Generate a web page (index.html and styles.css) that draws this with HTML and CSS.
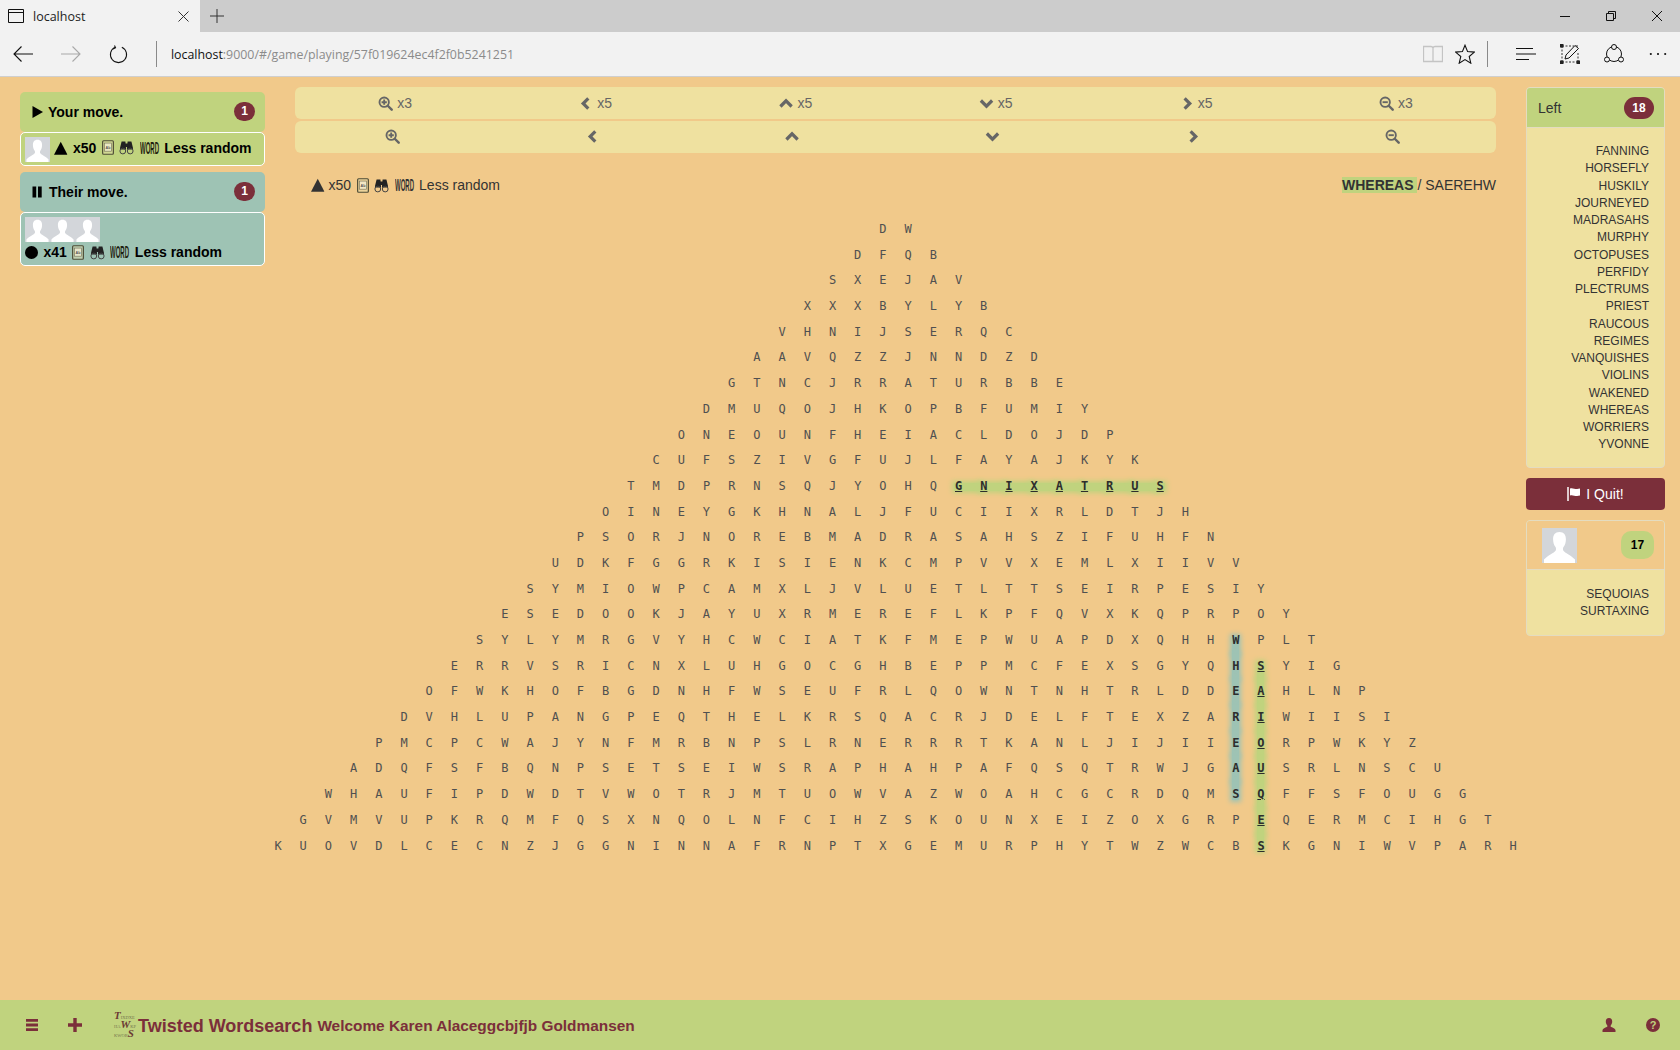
FILE: index.html
```html
<!DOCTYPE html>
<html lang="en">
<head>
<meta charset="utf-8">
<title>localhost</title>
<link rel="stylesheet" href="styles.css">
</head>
<body>
<svg class="defs" aria-hidden="true">
  <symbol id="zoomin" viewBox="0 0 16 16"><circle cx="6.6" cy="6.6" r="5" fill="none" stroke="currentColor" stroke-width="2"/><path d="M10.4 10.4 14.6 14.6" stroke="currentColor" stroke-width="2.6" stroke-linecap="round"/><path d="M6.6 3.8V9.4M3.8 6.6H9.4" stroke="currentColor" stroke-width="2"/></symbol>
  <symbol id="zoomout" viewBox="0 0 16 16"><circle cx="6.6" cy="6.6" r="5" fill="none" stroke="currentColor" stroke-width="2"/><path d="M10.4 10.4 14.6 14.6" stroke="currentColor" stroke-width="2.6" stroke-linecap="round"/><path d="M3.8 6.6H9.4" stroke="currentColor" stroke-width="2"/></symbol>
  <symbol id="chl" viewBox="0 0 16 16"><path d="M11 2.5 5.5 8 11 13.5" fill="none" stroke="currentColor" stroke-width="3.4"/></symbol>
  <symbol id="chr" viewBox="0 0 16 16"><path d="M6 2.5 11.500 8 6 13.5" fill="none" stroke="currentColor" stroke-width="3.4"/></symbol>
  <symbol id="chu" viewBox="0 0 16 16"><path d="M1.500 11.200 7.500 5.200 13.500 11.200" fill="none" stroke="currentColor" stroke-width="3.4"/></symbol>
  <symbol id="chd" viewBox="0 0 16 16"><path d="M2 4.8 8 10.8 14 4.8" fill="none" stroke="currentColor" stroke-width="3.4"/></symbol>
  <symbol id="person" viewBox="0 0 35 35"><rect width="35" height="35" fill="#d3d6da"/><path d="M17.5 4c-4.4 0-6.6 3-6.4 7.5.1 3 .8 5.6 2.4 7.6.6.8.8 2.400.1 3.700C12 25 6.500 27 2 31.500V35h31v-3.500C28.500 27 23 25 21.400 22.800c-.7-1.300-.5-2.900.1-3.700 1.600-2 2.300-4.600 2.400-7.600C24.100 7 21.900 4 17.500 4Z" fill="#fff"/></symbol>
  <symbol id="book" viewBox="0 0 13 16"><rect x=".7" y=".7" width="11.600" height="14.600" rx="1" fill="#e8dfae" fill-opacity=".45" stroke="#4e4c36" stroke-width="1.300"/><rect x="2.800" y="3.200" width="7.400" height="8.800" fill="#f5f0d5" fill-opacity=".7" stroke="#77745a" stroke-width=".7"/><text x="6.500" y="9.600" text-anchor="middle" class="booktext">Ab</text></symbol>
  <symbol id="binoc" viewBox="0 0 15 15"><path d="M1 8 2.600 1.500H6.400L7 8V9.400H1ZM8 8 8.600 1.500H12.400L14 8V9.400H8Z" fill="#222"/><path d="M6 3.500H9V7H6Z" fill="#222"/><circle cx="3.800" cy="11" r="2.900" fill="none" stroke="#444" stroke-width="1"/><circle cx="11.200" cy="11" r="2.900" fill="none" stroke="#444" stroke-width="1"/></symbol>
  <symbol id="tri" viewBox="0 0 14 14"><path d="M7 .5 14 14H0Z" fill="currentColor"/></symbol>
</svg>

<header class="chrome">
  <div class="tabstrip">
    <div class="tab">
      <svg class="tab-icon" viewBox="0 0 16 14"><path d="M.5.5H15.500V13.500H.5ZM.5 3.500H15.500" fill="none" stroke="#111"/></svg>
      <span class="tab-title">localhost</span>
      <svg class="tab-close" viewBox="0 0 11 11"><path d="M.5.5 10.500 10.500M10.500.5.5 10.500" stroke="#333" fill="none"/></svg>
    </div>
    <svg class="tab-new" viewBox="0 0 14 14"><path d="M7 0V14M0 7H14" stroke="#333" fill="none"/></svg>
    <div class="window-controls">
      <svg class="win" viewBox="0 0 10 10"><path d="M0 5.500H10" stroke="#111" fill="none"/></svg>
      <svg class="win" viewBox="0 0 10 10"><path d="M.5 2.500H7.500V9.500H.5ZM2.500 2.500V.5H9.500V7.500H7.500" stroke="#111" fill="none"/></svg>
      <svg class="win" viewBox="0 0 10 10"><path d="M0 0 10 10M10 0 0 10" stroke="#111" fill="none"/></svg>
    </div>
  </div>
  <div class="toolbar">
    <svg class="nav nav-back" viewBox="0 0 20 16"><path d="M20 8H1M8.500.5 1 8 8.500 15.500" stroke="#111" fill="none" stroke-width="1.100"/></svg>
    <svg class="nav nav-fwd" viewBox="0 0 20 16"><path d="M0 8H19M11.500.5 19 8 11.500 15.500" stroke="#a8a8a8" fill="none" stroke-width="1.100"/></svg>
    <svg class="nav nav-reload" viewBox="0 0 20 20"><path d="M6.500 2.300A8.500 8.500 0 1 0 13.500 2.300M5.800.5 6.900 3 4.300 4.200" stroke="#111" fill="none" stroke-width="1.100"/></svg>
    <span class="tool-sep"></span>
    <span class="url"><span class="url-host">localhost</span>:9000/#/game/playing/57f019624ec4f2f0b5241251</span>
    <svg class="tool tool-read" viewBox="0 0 20 18"><path d="M.5 1.500H8C9 1.500 9.700 2 10 3 10.300 2 11 1.500 12 1.500H19.500V16.500H.5ZM10 3V16.500" stroke="#c4c4c4" fill="none" stroke-width="1.300"/></svg>
    <svg class="tool tool-star" viewBox="0 0 20 20"><path d="M10 1.200 12.600 7.600 19.400 8.100 14.200 12.500 15.800 19.200 10 15.600 4.200 19.200 5.800 12.500.6 8.100 7.400 7.600Z" stroke="#111" fill="none" stroke-width="1.100"/></svg>
    <span class="tool-sep tool-sep-right"></span>
    <svg class="tool tool-hub" viewBox="0 0 20 14"><path d="M0 1.500H17M0 7H20M0 12.500H13" stroke="#111" fill="none" stroke-width="1.100"/></svg>
    <svg class="tool tool-note" viewBox="0 0 20 20"><path d="M2 2H18M2 18H18M2 2V18M18 9V18" stroke="#333" stroke-dasharray="2 1.500" fill="none"/><path d="M5 15 6 11 15 1.500 18.500 4.500 9 14Z" stroke="#111" fill="#f2f2f2"/><path d="M0 0H3.500V3.500H0ZM16.500 16.500H20V20H16.500ZM0 16.500H3.500V20H0Z" fill="#222"/></svg>
    <svg class="tool tool-share" viewBox="0 0 20 20"><circle cx="10" cy="10" r="7.500" fill="none" stroke="#111"/><circle cx="10" cy="3" r="2.500" fill="#f2f2f2" stroke="#111"/><circle cx="3" cy="15.500" r="2.500" fill="#f2f2f2" stroke="#111"/><circle cx="17" cy="15.500" r="2.500" fill="#f2f2f2" stroke="#111"/></svg>
    <svg class="tool tool-more" viewBox="0 0 20 4"><circle cx="2" cy="2" r="1.200" fill="#111"/><circle cx="10" cy="2" r="1.200" fill="#111"/><circle cx="18" cy="2" r="1.200" fill="#111"/></svg>
  </div>
</header>

<main class="page">
  <aside class="left">
    <div class="move-head green">
      <svg class="head-icon" viewBox="0 0 12 14"><path d="M.5 1 11 7 .5 13Z" fill="#000"/></svg>
      <span class="head-text">Your move.</span>
      <span class="badge">1</span>
    </div>
    <div class="game green">
      <div class="game-line with-avatar">
        <svg class="avatar"><use href="#person"/></svg>
        <svg class="mark"><use href="#tri"/></svg>
        <span>x50</span>
        <svg class="bk"><use href="#book"/></svg>
        <svg class="bn"><use href="#binoc"/></svg>
        <span class="wordmark"><span>WORD</span></span>
        <span>Less random</span>
      </div>
    </div>
    <div class="move-head teal second">
      <svg class="head-icon" viewBox="0 0 12 14"><path d="M.5 1.500H4.200V12.500H.5ZM6 1.500H9.700V12.500H6Z" fill="#000"/></svg>
      <span class="head-text head-text-their">Their move.</span>
      <span class="badge">1</span>
    </div>
    <div class="game teal">
      <div class="avatars">
        <svg class="avatar"><use href="#person"/></svg><svg class="avatar"><use href="#person"/></svg><svg class="avatar"><use href="#person"/></svg>
      </div>
      <div class="game-line">
        <span class="dot"></span>
        <span>x41</span>
        <svg class="bk"><use href="#book"/></svg>
        <svg class="bn"><use href="#binoc"/></svg>
        <span class="wordmark"><span>WORD</span></span>
        <span>Less random</span>
      </div>
    </div>
  </aside>

  <section class="center">
    <div class="pad">
      <button class="pad-btn"><svg class="ic"><use href="#zoomin"/></svg>x3</button>
      <button class="pad-btn"><svg class="ic"><use href="#chl"/></svg>x5</button>
      <button class="pad-btn"><svg class="ic"><use href="#chu"/></svg>x5</button>
      <button class="pad-btn"><svg class="ic"><use href="#chd"/></svg>x5</button>
      <button class="pad-btn"><svg class="ic"><use href="#chr"/></svg>x5</button>
      <button class="pad-btn"><svg class="ic"><use href="#zoomout"/></svg>x3</button>
    </div>
    <div class="pad pad-plain">
      <button class="pad-btn"><svg class="ic"><use href="#zoomin"/></svg></button>
      <button class="pad-btn"><svg class="ic"><use href="#chl"/></svg></button>
      <button class="pad-btn"><svg class="ic"><use href="#chu"/></svg></button>
      <button class="pad-btn"><svg class="ic"><use href="#chd"/></svg></button>
      <button class="pad-btn"><svg class="ic"><use href="#chr"/></svg></button>
      <button class="pad-btn"><svg class="ic"><use href="#zoomout"/></svg></button>
    </div>
    <div class="info">
      <div class="info-left">
        <svg class="mark"><use href="#tri"/></svg>
        <span>x50</span>
        <svg class="bk"><use href="#book"/></svg>
        <svg class="bn"><use href="#binoc"/></svg>
        <span class="wordmark"><span>WORD</span></span>
        <span>Less random</span>
      </div>
      <div class="info-right"><strong class="found">WHEREAS </strong> / SAEREHW</div>
    </div>
    <div class="grid">
      <div class="row">DW</div>
      <div class="row">DFQB</div>
      <div class="row">SXEJAV</div>
      <div class="row">XXXBYLYB</div>
      <div class="row">VHNIJSERQC</div>
      <div class="row">AAVQZZJNNDZD</div>
      <div class="row">GTNCJRRATURBBE</div>
      <div class="row">DMUQOJHKOPBFUMIY</div>
      <div class="row">ONEOUNFHEIACLDOJDP</div>
      <div class="row">CUFSZIVGFUJLFAYAJKYK</div>
      <div class="row">TMDPRNSQJYOHQ<span class="hit hx first">G</span><span class="hit hx">N</span><span class="hit hx">I</span><span class="hit hx">X</span><span class="hit hx">A</span><span class="hit hx">T</span><span class="hit hx">R</span><span class="hit hx">U</span><span class="hit hx last">S</span></div>
      <div class="row">OINEYGKHNALJFUCIIXRLDTJH</div>
      <div class="row">PSORJNOREBMADRASAHSZIFUHFN</div>
      <div class="row">UDKFGGRKISIENKCMPVVXEMLXIIVV</div>
      <div class="row">SYMIOWPCAMXLJVLUETLTTSEIRPESIY</div>
      <div class="row">ESEDOOKJAYUXRMEREFLKPFQVXKQPRPOY</div>
      <div class="row">SYLYMRGVYHCWCIATKFMEPWUAPDXQHH<span class="hit hv blue first">W</span>PLT</div>
      <div class="row">ERRVSRICNXLUHGOCGHBEPPMCFEXSGYQ<span class="hit hv blue">H</span><span class="hit hv first ul">S</span>YIG</div>
      <div class="row">OFWKHOFBGDNHFWSEUFRLQOWNTNHTRLDD<span class="hit hv blue">E</span><span class="hit hv ul">A</span>HLNP</div>
      <div class="row">DVHLUPANGPEQTHELKRSQACRJDELFTEXZA<span class="hit hv blue">R</span><span class="hit hv ul">I</span>WIISI</div>
      <div class="row">PMCPCWAJYNFMRBNPSLRNERRRTKANLJIJII<span class="hit hv blue">E</span><span class="hit hv ul">O</span>RPWKYZ</div>
      <div class="row">ADQFSFBQNPSETSEIWSRAPHAHPAFQSQTRWJG<span class="hit hv blue">A</span><span class="hit hv ul">U</span>SRLNSCU</div>
      <div class="row">WHAUFIPDWDTVWOTRJMTUOWVAZWOAHCGCRDQM<span class="hit hv blue last">S</span><span class="hit hv ul">Q</span>FFSFOUGG</div>
      <div class="row">GVMVUPKRQMFQSXNQOLNFCIHZSKOUNXEIZOXGRP<span class="hit hv ul">E</span>QERMCIHGT</div>
      <div class="row">KUOVDLCECNZJGGNINNAFRNPTXGEMURPHYTWZWCB<span class="hit hv last ul">S</span>KGNIWVPARH</div>
    </div>
  </section>

  <aside class="right">
    <div class="panel">
      <div class="panel-head green">
        <span class="panel-label">Left</span>
        <span class="badge badge-wide">18</span>
      </div>
      <ul class="words">
        <li>FANNING</li><li>HORSEFLY</li><li>HUSKILY</li><li>JOURNEYED</li><li>MADRASAHS</li><li>MURPHY</li><li>OCTOPUSES</li><li>PERFIDY</li><li>PLECTRUMS</li><li>PRIEST</li><li>RAUCOUS</li><li>REGIMES</li><li>VANQUISHES</li><li>VIOLINS</li><li>WAKENED</li><li>WHEREAS</li><li>WORRIERS</li><li>YVONNE</li>
      </ul>
    </div>
    <button class="quit">
      <svg class="flag" viewBox="0 0 14 14"><path d="M1 0V14" stroke="#fff" stroke-width="1.500"/><path d="M3 1.500C6 .2 8 3 13 1.500V8.500C8 10 6 7.200 3 8.500Z" fill="#fff"/></svg>
      I Quit!
    </button>
    <div class="panel">
      <div class="panel-head player">
        <svg class="avatar-large"><use href="#person"/></svg>
        <span class="score">17</span>
      </div>
      <ul class="words words-short">
        <li>SEQUOIAS</li><li>SURTAXING</li>
      </ul>
    </div>
  </aside>
</main>

<footer class="footer">
  <svg class="foot-icon menu" viewBox="0 0 12 12"><path d="M0 0H12V2.800H0ZM0 4.600H12V7.400H0ZM0 9.200H12V12H0Z" fill="currentColor"/></svg>
  <svg class="foot-icon plus" viewBox="0 0 14 14"><path d="M5.300 0H8.700V5.300H14V8.700H8.700V14H5.300V8.700H0V5.300H5.300Z" fill="currentColor"/></svg>
  <div class="logo">
    <span class="logo-line"><b>T</b>IXDXE</span>
    <span class="logo-line">HA<b>W</b>KP</span>
    <span class="logo-line">KWOR<b>S</b></span>
  </div>
  <span class="brand">Twisted Wordsearch</span>
  <span class="welcome">Welcome Karen Alaceggcbjfjb Goldmansen</span>
  <svg class="foot-icon user" viewBox="0 0 14 14"><path d="M7 0C4.800 0 3.700 1.600 3.800 3.800 3.900 5.400 4.500 6.600 5.300 7.500 5.500 8.200 5.400 8.700 4.800 9 3 9.800 1 10.500.5 12V14H13.500V12C13 10.500 11 9.800 9.200 9 8.600 8.700 8.500 8.200 8.700 7.500 9.500 6.600 10.100 5.400 10.200 3.800 10.300 1.600 9.200 0 7 0Z" fill="currentColor"/></svg>
  <span class="help">?</span>
</footer>
</body>
</html>
```
FILE: styles.css
```css
* { box-sizing: border-box; }

html, body { margin: 0; height: 100%; }

body {
  display: flex;
  flex-direction: column;
  height: 1050px;
  overflow: hidden;
  background: #f1c98a;
  color: #333;
  font-family: "Liberation Sans", Arial, sans-serif;
  font-size: 14px;
  line-height: 20px;
}

.defs { display: none; }

/* browser chrome */
.chrome { flex: none; }

.tabstrip {
  display: flex;
  align-items: center;
  height: 32px;
  background: #cccccc;
}

.tab {
  display: flex;
  align-items: center;
  width: 200px;
  height: 32px;
  padding: 0 11px 0 8px;
  background: #f2f2f2;
  color: #222;
}

.tab-icon { width: 16px; height: 14px; }

.tab-title {
  margin-left: 9px;
  padding-top: 2px;
  font-family: "Open Sans", sans-serif;
  font-size: 12.500px;
}

.tab-close { width: 11px; height: 11px; margin-left: auto; }

.tab-new { width: 14px; height: 14px; margin-left: 10px; }

.window-controls {
  display: flex;
  gap: 36px;
  margin-left: auto;
  margin-right: 18px;
}

.win { width: 10px; height: 10px; }

.toolbar {
  display: flex;
  align-items: center;
  height: 45px;
  background: #f2f2f2;
  border-bottom: 1px solid #cfcfcf;
}

.nav-back { width: 20px; height: 16px; margin-left: 13px; }
.nav-fwd { width: 20px; height: 16px; margin-left: 28px; }
.nav-reload { width: 19px; height: 19px; margin-left: 28px; }

.tool-sep {
  width: 1px;
  height: 26px;
  margin-left: 28px;
  background: #8a8a8a;
}

.url {
  margin-left: 14px;
  padding-top: 2px;
  color: #8b8b8b;
  font-family: "Open Sans", sans-serif;
  font-size: 12.380px;
  white-space: nowrap;
}

.url-host { color: #111; }

.tool-read { width: 20px; height: 18px; margin-left: auto; }
.tool-star { width: 20px; height: 20px; margin-left: 12px; }
.tool-sep-right { margin-left: 12px; }
.tool-hub { width: 20px; height: 14px; margin-left: 28px; }
.tool-note { width: 20px; height: 20px; margin-left: 24px; }
.tool-share { width: 20px; height: 20px; margin-left: 24px; }
.tool-more { width: 18px; height: 4px; margin-left: 25px; margin-right: 13px; }

/* page columns */
.page {
  flex: 1;
  display: flex;
  align-items: flex-start;
  min-height: 0;
}

.green { background: #c0d37e; }
.teal { background: #9ec3b4; }

.left {
  flex: none;
  width: 245px;
  margin: 15px 0 0 20px;
  color: #000;
  font-weight: bold;
}

.move-head {
  display: flex;
  align-items: center;
  height: 40px;
  padding: 0 10px 0 12px;
  border-radius: 5px;
}

.second { margin-top: 6px; }

.head-icon { width: 12px; height: 14px; }

.head-text { margin-left: 4px; }

.head-text-their { margin-left: 5px; }

.badge {
  margin-left: auto;
  margin-bottom: 2px;
  min-width: 21px;
  height: 19px;
  border-radius: 10px;
  background: #7b2f3a;
  color: #fff;
  font-size: 12px;
  font-weight: bold;
  line-height: 19px;
  text-align: center;
}

.badge-wide {
  width: 30px;
  height: 22px;
  margin-bottom: 0;
  border-radius: 11px;
  line-height: 22px;
}

.game {
  padding: 4px 4px 3px;
  border: 1px solid #fff;
  border-radius: 5px;
}

.game-line {
  display: flex;
  align-items: center;
  gap: 5.500px;
}

.with-avatar > * { margin-bottom: 4px; }

.with-avatar > .avatar {
  margin-right: -1.500px;
  margin-bottom: 0;
}

.avatar { display: block; width: 25px; height: 25px; flex: none; }

.avatars { display: flex; }

.mark { width: 13.500px; height: 14px; flex: none; }

.bk { width: 12px; height: 15px; flex: none; }

.bn { width: 15px; height: 15px; flex: none; }

.booktext {
  fill: #555;
  font-family: "Liberation Sans", sans-serif;
  font-size: 4px;
  font-weight: bold;
}

.wordmark {
  display: block;
  flex: none;
  width: 19px;
  height: 16px;
  color: #1f1f10;
  font-family: "Liberation Sans", sans-serif;
  font-size: 14px;
  font-weight: bold;
  line-height: 16px;
}

.wordmark span {
  display: block;
  width: 46px;
  transform: scale(.43, 1.200);
  transform-origin: left center;
}

.dot {
  width: 13px;
  height: 13px;
  flex: none;
  border-radius: 50%;
  background: #000;
}

/* middle column */
.center {
  flex: none;
  width: 1201px;
  margin: 10px 0 0 30px;
}

.pad {
  display: grid;
  grid-template-columns: repeat(6, 1fr);
  height: 32px;
  margin-bottom: 2px;
  border-radius: 6px;
  background: #efe1a0;
}

.pad-btn {
  display: flex;
  align-items: center;
  justify-content: center;
  gap: 4px;
  padding: 0;
  border: 0;
  background: none;
  color: #666;
  font: inherit;
}

.pad-plain .pad-btn { padding: 0 6px 2px 0; }

.ic { width: 15px; height: 15px; flex: none; }

.info {
  display: flex;
  align-items: center;
  justify-content: space-between;
  height: 28px;
  margin-top: 18px;
  padding-left: 16px;
}

.info-left {
  display: flex;
  align-items: center;
  gap: 5.500px;
}

.info-left .mark { margin-right: -1.500px; }

.info-left .wordmark { color: #333; }

.found { background: #c0d37e; }

/* letter grid */
.grid {
  position: relative;
  isolation: isolate;
  display: flex;
  flex-direction: column;
  align-items: center;
  margin-top: 18px;
  color: #505050;
  font-family: "DejaVu Sans Mono", monospace;
  font-size: 12px;
}

.row {
  flex: none;
  height: 25.700px;
  padding-left: 18px;
  letter-spacing: 17.980px;
  line-height: 25.700px;
  white-space: nowrap;
}

.hit {
  position: relative;
  display: inline-block;
  width: 25.200px;
  color: #2d2d2d;
  font-weight: bold;
  letter-spacing: 0;
}

.hx, .ul { text-decoration: underline; }

.hit::before {
  content: "";
  position: absolute;
  z-index: -1;
  background: #c0d37e;
  box-shadow: 0 0 5px 2px #c0d37e;
}

.hx::before { left: -1px; right: -1px; top: 9px; height: 8px; }
.hx.last::before { right: 17px; }

.hv::before { left: 0; width: 7px; top: 0; bottom: 0; }
.hv.first::before { top: 8px; }
.hv.last::before { bottom: 8px; }

.blue::before {
  background: #9ec3b4;
  box-shadow: 0 0 5px 2px #9ec3b4;
}

/* right column */
.right {
  flex: none;
  width: 139px;
  margin: 10px 0 0 30px;
}

.panel {
  border: 1px solid #e4dcc0;
  border-radius: 4px;
  background: #efe1a0;
  overflow: hidden;
}

.panel-head {
  display: flex;
  align-items: center;
  justify-content: space-between;
  height: 40px;
  padding: 0 10px;
  border-bottom: 1px solid #e4dcc0;
}

.panel-label { margin-left: 1px; }

.player {
  height: 49px;
  padding: 0 10px 0 15px;
  background: #f1c98a;
}

.avatar-large { display: block; width: 35px; height: 35px; }

.score {
  width: 33px;
  height: 28px;
  border-radius: 10px;
  background: #c0d37e;
  color: #000;
  font-size: 12px;
  font-weight: bold;
  line-height: 28px;
  text-align: center;
}

.words {
  margin: 0;
  padding: 15px 15px 13.500px 0;
  font-size: 12px;
  line-height: 17.250px;
  list-style: none;
  text-align: right;
}

.words-short { padding: 16px 15px 14.500px 0; }

.quit {
  display: flex;
  align-items: center;
  justify-content: center;
  gap: 5px;
  width: 100%;
  height: 32px;
  margin: 10px 0;
  border: 0;
  border-radius: 4px;
  background: #7b2f3a;
  color: #fff;
  font: inherit;
}

.flag { width: 14px; height: 14px; }

/* footer */
.footer {
  flex: none;
  display: flex;
  align-items: center;
  height: 50px;
  padding: 0 20px 0 26px;
  background: #c0d37e;
  color: #7b2f3a;
  font-weight: bold;
}

.foot-icon { flex: none; }

.menu { width: 12px; height: 12px; }
.plus { width: 14px; height: 14px; margin-left: 30px; }

.logo {
  display: flex;
  flex-direction: column;
  flex: none;
  width: 24px;
  margin-left: 32px;
  color: #77774f;
  font-family: "Liberation Serif", serif;
  font-size: 4.500px;
  font-weight: normal;
  line-height: 7px;
}

.logo-line { white-space: nowrap; }

.logo-line b {
  color: #6b3b34;
  font-size: 11px;
  font-style: italic;
  line-height: 6px;
}

.brand { padding-top: 2px; font-size: 18px; }

.welcome { margin-left: 5px; padding-top: 2px; font-size: 15.400px; }

.user { width: 14px; height: 14px; margin-left: auto; }

.help {
  width: 14px;
  height: 14px;
  margin-left: 30px;
  border-radius: 50%;
  background: #7b2f3a;
  color: #c0d37e;
  font-size: 11px;
  line-height: 14px;
  text-align: center;
}
```
